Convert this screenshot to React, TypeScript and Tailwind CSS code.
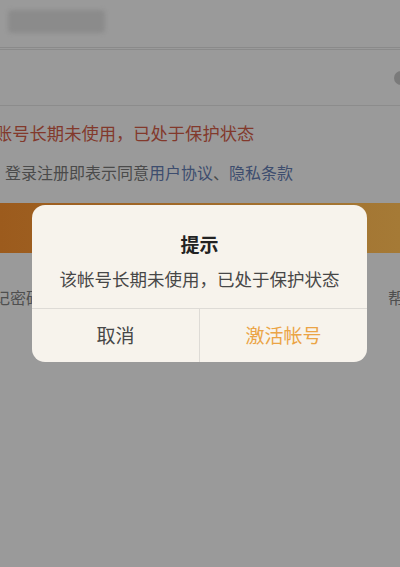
import React from "react"

const font = { fontFamily: '"Noto Sans CJK SC", "Noto Sans", sans-serif' }

export default function App() {
  return (
    <div className="relative w-[400px] h-[567px] overflow-hidden bg-[#9a9a9a]" style={font}>
      {/* dimmed page underneath */}
      <div className="flex flex-col">
        <div className="h-[47px] pt-[10px] pl-[8px]">
          <div className="w-[97px] h-[23px] rounded-sm bg-[#8b8b8b] blur-[2px]" />
        </div>
        <div className="h-[3px] border-y border-[#8a8a8a]" />
        <div className="h-[55px] flex items-center justify-end">
          <div className="w-[8px] h-[14px] rounded-l-full bg-[#7a7a7a] -mr-[2px] blur-[0.5px]" />
        </div>
        <div className="h-px bg-[#8c8c8c]" />
        <div className="pt-[15px] -ml-[5px] text-[17.3px] leading-[24px] text-[#82392c] whitespace-nowrap">
          账号长期未使用，已处于保护状态
        </div>
        <div className="pt-[16px] pl-[5px] text-[16px] leading-[22px] text-[#4a4a4a] whitespace-nowrap">
          登录注册即表示同意<span className="text-[#3d4d6e]">用户协议</span>、<span className="text-[#3d4d6e]">隐私条款</span>
        </div>
        <div className="mt-[20px] h-[50px] bg-gradient-to-r from-[#9c5b1d] to-[#a57a36]" />
        <div className="mt-[33px] flex justify-between text-[16px] leading-[22px] text-[#4f4f4f] whitespace-nowrap">
          <span className="-ml-[6px]">记密码</span>
          <span className="-mr-[20px]">帮助</span>
        </div>
      </div>

      {/* alert dialog */}
      <div className="absolute left-[32px] top-[205px] w-[335px] rounded-[13px] bg-[#f7f3ec] overflow-hidden">
        <div className="pt-[26px] pb-[17px] flex flex-col items-center">
          <div className="text-[19px] leading-[26px] font-bold text-[#222]">提示</div>
          <div className="mt-[10px] text-[17.5px] leading-[24px] text-[#474747] whitespace-nowrap">
            该帐号长期未使用，已处于保护状态
          </div>
        </div>
        <div className="flex h-[54px] border-t border-[#dedbd6] text-[19px]">
          <div className="flex-1 flex items-center justify-center text-[#474747] border-r border-[#dedbd6]">取消</div>
          <div className="flex-1 flex items-center justify-center text-[#eba445]">激活帐号</div>
        </div>
      </div>
    </div>
  )
}
